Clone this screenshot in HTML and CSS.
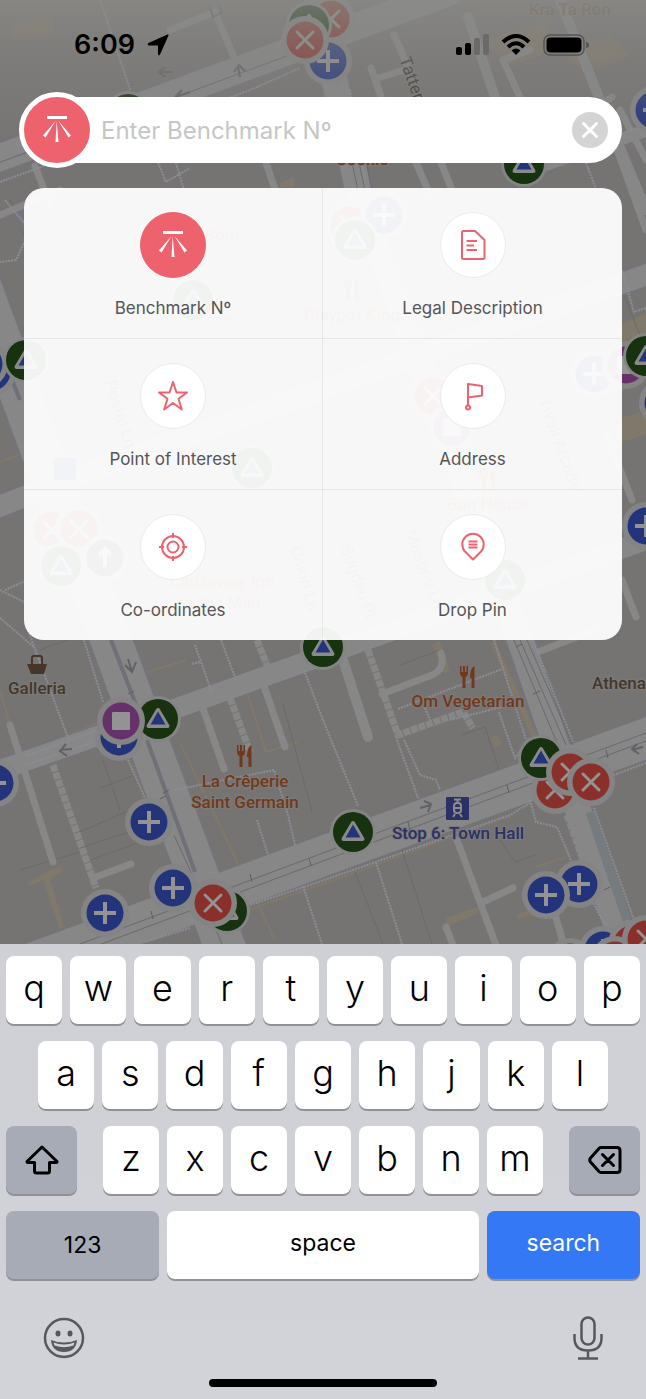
FILE: index.html
```
<!DOCTYPE html>
<html lang="en">
<head>
	<meta charset="utf-8">
	<meta name="viewport" content="width=device-width, initial-scale=1">
	<title>Benchmark Search</title>
	<link rel="stylesheet" href="styles.css">
</head>
<body>
	<svg class="defs" width="0" height="0" aria-hidden="true">
		<defs>
			<g id="m-plus">
				<circle r="24" class="halo"/>
				<circle r="18.5" class="blue"/>
				<path d="M-11 0H11M0 -11V11" class="glyph"/>
			</g>
			<g id="m-cross">
				<circle r="24" class="halo"/>
				<circle r="18.5" class="red"/>
				<path d="M-8 -8L8 8M8 -8L-8 8" class="glyph round"/>
			</g>
			<g id="m-tri">
				<circle r="23" class="halo"/>
				<circle r="20" class="green"/>
				<path d="M0 -9L9.500 7H-9.500Z" class="tri-edge"/>
				<path d="M0 -7.500L7.500 5.500H-7.500Z" class="blue"/>
			</g>
			<g id="m-square">
				<circle r="24" class="halo"/>
				<circle r="18.500" class="purple"/>
				<rect x="-9" y="-9" width="18" height="18" rx="1" class="glyph-fill"/>
			</g>
			<g id="m-arrow">
				<circle r="24" class="halo"/>
				<circle r="18.500" class="dark"/>
				<path d="M0 9V-8M-6 -3L0 -9L6 -3" class="glyph"/>
			</g>
		</defs>
		<symbol id="m-food" viewBox="0 0 16 24">
			<path d="M0 1v7q0 3 2.500 4V23h3V12Q8 11 8 8V1H6.500v6H5V1H3v6H1.500V1zM14.500 1Q10 3 10 13h1.500v10h3z"/>
		</symbol>
		<symbol id="benchmark" viewBox="0 0 30 28">
			<path d="M5 0H25V3H5zM14.700 5L16.500 26H13.500zM13.500 5L3.500 21.500L1 19.500zM16.500 5L29 19.500L26.500 21.500z"/>
		</symbol>
	</svg>

	<main class="screen">
		<svg class="map" viewBox="0 0 646 944" preserveAspectRatio="xMidYMin slice" aria-hidden="true">
			<defs>
				<linearGradient id="haze" x1="0" y1="0" x2="0" y2="1">
					<stop offset="0" stop-color="#8c8c89" stop-opacity=".75"/>
					<stop offset=".45" stop-color="#868684" stop-opacity=".4"/>
					<stop offset="1" stop-color="#868684" stop-opacity="0"/>
				</linearGradient>
			</defs>
			<rect width="646" height="944" fill="#767472"/>

			<!-- plazas and yards -->
			<g fill="#80786a">
				<path d="M12 24l42-8v20l-42 4zM480 42l64-22 18 26-50 20zM560 50l50-14 20 20-46 16zM620 325l26-12v60l-26 20zM622 418l24-8v24l-24 8zM446 918l32-11v7l-32 12zM516 915l24-9v6l-22 8zM280 183l14-6v10h-14zM490 737l8-2 4 10-8 2zM28 882l32-16 3 5-13 8 14 48-4 3-17-50-14 6zM432 645l8-4 10 30-6 2zM490 642l6 0 46 104-6 2z"/>
			</g>
			<g class="yard">
				<path d="M145 673L186 660M26 753L100 722M180 743L275 940M0 690L10 725M247 693L266 752L298 742M131 760L146 800M0 296L26 370M0 462L18 455M535 867L567 857M323 884L510 816M248 910L323 884"/>
			</g>

			<!-- building outlines -->
			<g class="plot">
				<path d="M75 834L130 810M80 848L135 830M85 862L140 842M103 760L120 810M100 788L132 776M20 870L80 852M283 704L312 812M355 872L383 944M402 850L432 944M500 840L515 862L535 855M462 735L485 727L502 780M40 650L120 620M10 200L30 250M400 665L440 650M520 200L560 300M610 260L646 350"/>
			</g>

			<!-- roads: casing first, surface above -->
			<g class="casing">
				<path d="M-20 165L450 -8" stroke-width="30"/>
				<path d="M-20 284L111 640L155 760L226 950" stroke-width="44"/>
				<path d="M0 770L180 707L380 635L660 535" stroke-width="22"/>
				<path d="M-20 982L323 856L680 726" stroke-width="42"/>
				<path d="M315 -10L358 190L520 640L626 950" stroke-width="30"/>
				<path d="M525 172L660 126M20 210L36 240" stroke-width="15"/>
				<path d="M-10 510L80 475L660 270" stroke-width="24"/>
			</g>
			<g class="road">
				<path d="M-20 165L450 -8" stroke-width="27"/>
				<path d="M-20 284L111 640L155 760L226 950" stroke-width="41"/>
				<path d="M0 770L180 707L380 635L660 535" stroke-width="20"/>
				<path d="M-20 982L323 856L680 726" stroke-width="40"/>
				<path d="M315 -10L358 190L520 640L626 950" stroke-width="26"/>
				<path d="M-10 510L80 475L660 270" stroke-width="21"/>
				<path d="M525 172L660 126" stroke-width="12"/>
				<path d="M343 660L368 737M556 -10L600 100L646 210M468 17L496 100" stroke-width="10"/>
				<path d="M10 725L53 862M200 700L224 769M263 683L285 747M382 694L432 675Q446 669 441 653M457 840L497 948M483 902L513 888M93 878L131 864M525 657L600 628M446 927L454 948M555 915L565 948M170 30L215 12L235 60M371 68L384 105M378 78L404 70M394 35L412 76M520 97L503 60L530 50M600 106L612 97M265 160L276 192M35 166L50 205M415 160L430 195M440 160L452 190M605 120L619 155L646 230M0 215L60 190M622 580L636 617M646 160L620 110M632 500L605 430" stroke-width="7"/>
			</g>
			<path class="rail" d="M345 130L360 200L514 640L558 745M352 130L367 200L520 640L566 745M358 120L374 200L527 640L573 745M-10 166L330 40M0 974L323 853L646 733M0 982L323 861L646 741M174 835L200 892L222 944"/>
			<path class="shade" d="M111 640L140 715M147 740L195 872M0 350L20 400"/>
			<path class="shade wide" d="M590 812L627 920"/>

			<!-- stepped walkways -->
			<path class="steps" d="M53 765L96 888M230 698L250 752M257 640L268 668M368 650L398 735L463 712L473 728M567 815L612 940"/>
			<path class="steps zig" d="M575 810L616 935"/>

			<!-- footpaths -->
			<path class="foot" d="M28 630L68 738M84 640L103 702M26 765L100 740M26 756L98 730M195 645L212 693M221 640L236 680M192 664L200 662M304 670L323 720L358 806M175 790L274 770L288 815L295 845M397 740L418 798M398 709L502 669M450 720L502 707M425 708L430 720M494 640L530 752M499 712L515 758L530 738M533 640L573 742M530 800L536 822L557 827L573 865L605 925M594 808L634 920M250 905L310 885L510 815L530 803M303 886L322 944M145 942L190 928M0 618L35 648M128 760L145 798M646 763L595 782M0 182L110 142L250 90L300 68M100 0L132 95M157 160L166 182L190 168M175 160L184 190M5 200L30 230L16 260L0 262M585 160L598 195M622 270L634 312L646 308M350 90L365 180M0 590L30 605M5 590L45 572M404 740L420 775L436 780L440 790M257 820L268 855M376 862L402 944M646 125L520 170"/>

			<!-- direction arrows -->
			<path class="dir" d="M128 659L132 672M125 665L132 672L136 662M72 749L60 750M66 744L60 751L67 756M420 808L431 805M424 801L431 804L428 812M643 747L632 750M637 744L632 749L639 754M240 77L238 66M234 72L239 65L245 71M190 92L175 97L182 90M175 97L181 102M172 72L160 72M165 67L159 72L165 77M209 5L213 17L222 12L218 5"/>
			<path class="tick" d="M128 694l6-3M163 793l6-3M160 799l6-3M250 874l2 8M309 858l2 8M151 911l2 8M408 822l2 8M507 785l2 8M606 750l2 8M516 647l6-3M533 694l7-3M604 890l6-3"/>

			<!-- labels -->
			<g class="label road-name">
				<text transform="translate(399 59) rotate(70)">Tatters</text>
				<text transform="translate(104 382) rotate(72)">Postal Ln</text>
				<text transform="translate(538 400) rotate(70)">Tivoli Arcade</text>
				<text transform="translate(340 548) rotate(70)">Sugden Pl</text>
				<text transform="translate(405 532) rotate(70)">Masons Ln</text>
				<text transform="translate(290 548) rotate(74)">Union Ln</text>
			</g>
			<g class="label food">
				<text x="362" y="165">Cookie</text>
				<text x="205" y="241">Pho Bòm</text>
				<text x="352" y="321">Claypot King</text>
				<text x="488" y="510">Bun House</text>
				<text x="222" y="587">Causeway Inn</text>
				<text x="218" y="609">on the Mall</text>
				<text x="468" y="707">Om Vegetarian</text>
				<text x="245" y="787">La Crêperie</text>
				<text x="245" y="808">Saint Germain</text>
				<use href="#m-food" x="460" y="665" width="16" height="24"/>
				<use href="#m-food" x="237" y="744" width="16" height="24"/>
				<use href="#m-food" x="480" y="468" width="16" height="24"/>
				<use href="#m-food" x="344" y="278" width="16" height="24"/>
			</g>
			<g class="label shop">
				<text x="37" y="694">Galleria</text>
				<text x="592" y="689" class="from-left">Athena</text>
				<path d="M27 664h20l-3 10H31z"/>
				<path d="M32 664v-6q0-2 2-2h6q2 0 2 2v6" fill="none" stroke="#46362a" stroke-width="2"/>
				<text x="570" y="15" class="faded">Kra Ta Ron</text>
			</g>
			<g class="label transit">
				<text x="458" y="839">Stop 6: Town Hall</text>
				<rect x="446" y="797" width="23" height="23" rx="1"/>
				<rect x="54" y="458" width="22" height="22" rx="1"/>
				<g fill="none" stroke="#8c8c90" stroke-width="2">
					<rect x="454" y="803" width="7" height="10" rx="3"/>
					<path d="M454 799.500h7M457.500 800v3M454 808h7M455 814l-2 3M460 814l2 3"/>
				</g>
			</g>

			<!-- benchmark markers -->
			<g>
				<use href="#m-cross" x="331" y="19"/>
				<use href="#m-tri" x="309" y="25"/>
				<use href="#m-plus" x="328" y="61"/>
				<use href="#m-cross" x="305" y="40"/>
				<use href="#m-tri" x="128" y="114"/>
				<use href="#m-plus" x="654" y="110"/>
				<use href="#m-tri" x="524" y="164"/>
				<use href="#m-cross" x="349" y="225"/>
				<use href="#m-plus" x="384" y="215"/>
				<use href="#m-tri" x="355" y="240"/>
				<use href="#m-tri" x="193" y="300"/>
				<use href="#m-plus" x="-8" y="372"/>
				<use href="#m-plus" x="-16" y="364"/>
				<use href="#m-tri" x="26" y="360"/>
				<use href="#m-plus" x="594" y="374"/>
				<use href="#m-square" x="626" y="365"/>
				<use href="#m-tri" x="646" y="356"/>
				<use href="#m-plus" x="663" y="403"/>
				<use href="#m-cross" x="433" y="396"/>
				<use href="#m-square" x="452" y="427"/>
				<use href="#m-tri" x="252" y="468"/>
				<use href="#m-cross" x="52" y="530"/>
				<use href="#m-cross" x="79" y="529"/>
				<use href="#m-tri" x="61" y="566"/>
				<use href="#m-arrow" x="105" y="558"/>
				<use href="#m-plus" x="646" y="526"/>
				<use href="#m-tri" x="505" y="580"/>
				<use href="#m-tri" x="323" y="647"/>
				<use href="#m-plus" x="119" y="737"/>
				<use href="#m-tri" x="158" y="719"/>
				<use href="#m-square" x="121" y="721"/>
				<use href="#m-plus" x="-5" y="783"/>
				<use href="#m-plus" x="149" y="822"/>
				<use href="#m-plus" x="173" y="888"/>
				<use href="#m-plus" x="105" y="913"/>
				<use href="#m-tri" x="227" y="911"/>
				<use href="#m-cross" x="213" y="903"/>
				<use href="#m-tri" x="353" y="832"/>
				<use href="#m-cross" x="555" y="790"/>
				<use href="#m-tri" x="541" y="758"/>
				<use href="#m-cross" x="570" y="772"/>
				<use href="#m-cross" x="591" y="782"/>
				<use href="#m-plus" x="579" y="884"/>
				<use href="#m-plus" x="546" y="895"/>
				<use href="#m-plus" x="570" y="962"/>
				<use href="#m-plus" x="603" y="950"/>
				<use href="#m-cross" x="632" y="944"/>
				<use href="#m-cross" x="615" y="960"/>
				<use href="#m-cross" x="646" y="939"/>
			</g>
			<rect width="646" height="150" fill="url(#haze)"/>
		</svg>

		<header class="status">
			<span class="time">6:09</span>
			<svg class="locate" width="22" height="22" viewBox="0 0 22 22" aria-hidden="true"><path d="M20.500 .5Q22 0 21.300 2L13 20.500Q11.500 22.500 11 20V11.500H2Q-.5 11 1.500 9z"/></svg>
			<svg width="33" height="22" viewBox="0 0 33 22" aria-label="Signal">
				<rect x="0" y="13" width="6" height="8" rx="2"/>
				<rect x="9" y="9" width="6" height="12" rx="2"/>
				<rect x="18" y="4" width="6" height="17" rx="2" fill="#6b6a69"/>
				<rect x="27" y="0" width="6" height="21" rx="2" fill="#6b6a69"/>
			</svg>
			<svg width="30" height="22" viewBox="0 0 30 22" aria-label="Wi-Fi">
				<g fill="none" stroke="#000" stroke-width="4">
					<path d="M2 8Q15 -4 28 8M7 13Q15 5.500 23 13"/>
				</g>
				<path d="M10.500 16.500Q15 12.500 19.500 16.500L15 21z"/>
			</svg>
			<svg width="47" height="22" viewBox="0 0 47 22" aria-label="Battery">
				<rect x="1" y="1" width="40" height="20" rx="6" fill="none" stroke="#555" stroke-width="1.500"/>
				<rect x="3.500" y="3.500" width="35" height="15" rx="4"/>
				<path d="M43 8q3 .5 3 3t-3 3z" fill="#555"/>
			</svg>
		</header>

		<form class="search">
			<span class="badge"><svg width="30" height="28"><use href="#benchmark"/></svg></span>
			<input type="text" placeholder="Enter Benchmark Nº" aria-label="Enter Benchmark Nº">
			<button type="reset" class="clear" aria-label="Clear">
				<svg width="16" height="16" viewBox="0 0 16 16"><path d="M1.500 1.500L14.500 14.500M14.500 1.500L1.500 14.500"/></svg>
			</button>
		</form>

		<nav class="modes">
			<button type="button" class="mode active">
				<span class="disc"><svg width="30" height="28"><use href="#benchmark"/></svg></span>
				Benchmark Nº
			</button>
			<button type="button" class="mode">
				<span class="disc"><svg width="32" height="32" viewBox="0 0 32 32"><path d="M6.500 2H18L27.500 11V28.500Q27.500 30 26 30H6.500Q5 30 5 28.500V3.500Q5 2 6.500 2zM9.500 12H20M9.500 16.500H17M9.500 21H20"/></svg></span>
				Legal Description
			</button>
			<button type="button" class="mode">
				<span class="disc"><svg width="32" height="32" viewBox="0 0 32 32"><path d="M16 2L19.500 12.500H30L21.500 18.800L24.800 29.500L16 23L7.200 29.500L10.500 18.800L2 12.500H12.500z"/></svg></span>
				Point of Interest
			</button>
			<button type="button" class="mode">
				<span class="disc"><svg width="32" height="32" viewBox="0 0 32 32"><path d="M11 26V4L25 6V15.500L11 17.500"/><circle cx="11" cy="27.500" r="2"/></svg></span>
				Address
			</button>
			<button type="button" class="mode">
				<span class="disc"><svg width="32" height="32" viewBox="0 0 32 32"><circle cx="16" cy="16" r="11"/><circle cx="16" cy="16" r="5.500"/><path d="M16 2V7M16 25V30M2 16H7M25 16H30"/></svg></span>
				Co-ordinates
			</button>
			<button type="button" class="mode">
				<span class="disc"><svg width="32" height="32" viewBox="0 0 32 32"><path d="M16 28.500L8 20.500A10.700 10.700 0 1 1 24 20.500zM11.500 10.500H20.500M11.500 13.500H20.500M11.500 16.500H20.500"/></svg></span>
				Drop Pin
			</button>
		</nav>
	</main>

	<section class="keyboard" aria-label="Keyboard">
		<div class="row">
			<button class="key">q</button><button class="key">w</button><button class="key">e</button><button class="key">r</button><button class="key">t</button><button class="key">y</button><button class="key">u</button><button class="key">i</button><button class="key">o</button><button class="key">p</button>
		</div>
		<div class="row inset">
			<button class="key">a</button><button class="key">s</button><button class="key">d</button><button class="key">f</button><button class="key">g</button><button class="key">h</button><button class="key">j</button><button class="key">k</button><button class="key">l</button>
		</div>
		<div class="row shifted">
			<button class="key grey" aria-label="Shift">
				<svg width="34" height="32" viewBox="0 0 34 32"><path d="M17 3L32 17.500Q32 18.500 31 18.500H24.500V27Q24.500 29 22.500 29H11.500Q9.500 29 9.500 27V18.500H3Q2 18.500 2 17.500z"/></svg>
			</button>
			<div class="row letters">
				<button class="key">z</button><button class="key">x</button><button class="key">c</button><button class="key">v</button><button class="key">b</button><button class="key">n</button><button class="key">m</button>
			</div>
			<button class="key grey" aria-label="Delete">
				<svg width="34" height="30" viewBox="0 0 34 30"><path d="M13 2.500H29Q32 2.500 32 5.500V24.500Q32 27.500 29 27.500H13Q12 27.500 11 26.500L2.500 17Q1 15 2.500 13L11 3.500Q12 2.500 13 2.500zM14.500 9.500L25.500 20.500M25.500 9.500L14.500 20.500"/></svg>
			</button>
		</div>
		<div class="row commands">
			<button class="key grey">123</button>
			<button class="key space">space</button>
			<button class="key go">search</button>
		</div>
		<div class="tools">
			<button aria-label="Emoji">
				<svg width="42" height="42" viewBox="0 0 42 42">
					<circle cx="21" cy="21" r="19" fill="none" stroke="#55585c" stroke-width="2.500"/>
					<ellipse cx="15" cy="16.500" rx="2.500" ry="3"/>
					<ellipse cx="27" cy="16.500" rx="2.500" ry="3"/>
					<path d="M8 23Q21 28 34 23Q33 35 21 35Q9 35 8 23z"/>
					<path d="M10.500 25.500Q21 29.500 31.500 25.500L30.500 28.500Q21 32 11.500 28.500z" fill="#d0d2d7"/>
				</svg>
			</button>
			<button aria-label="Dictate">
				<svg width="30" height="44" viewBox="0 0 30 44" fill="none" stroke="#55585c" stroke-width="2.500">
					<rect x="8.500" y="1.500" width="13" height="27" rx="6.500"/>
					<path d="M1.500 18V22Q1.500 34.500 15 34.500T28.500 22V18M15 34.500V42M5 42.500H25"/>
				</svg>
			</button>
		</div>
		<div class="home"></div>
	</section>
</body>
</html>
```

FILE: styles.css
```
* {
	box-sizing: border-box;
}
body {
	margin: 0;
	min-height: 100vh;
	display: flex;
	flex-direction: column;
	font-family: Inter, "Liberation Sans", sans-serif;
}
button {
	border: 0;
	padding: 0;
	background: none;
	font: inherit;
	color: inherit;
}
.defs {
	position: absolute;
}

/* map */
.screen {
	position: relative;
	flex: 1;
	padding: 0 24px 24px;
	overflow: hidden;
}
.map {
	position: absolute;
	left: 0;
	top: 0;
	width: 100%;
	height: 100%;
}
.casing, .road {
	fill: none;
	stroke: #73747e;
	stroke-linejoin: round;
	stroke-linecap: round;
}
.road {
	stroke: #878787;
}
.yard {
	fill: none;
	stroke: #80786a;
	stroke-width: 2;
}
.plot {
	fill: none;
	stroke: #6c6a69;
}
.rail {
	fill: none;
	stroke: #6a6a70;
}
.shade {
	fill: none;
	stroke: #6f7078;
	stroke-width: 4;
}
.shade.wide {
	stroke: #757b7e;
	stroke-width: 9;
}
.steps {
	fill: none;
	stroke: #878787;
	stroke-width: 7;
	stroke-dasharray: 7 1;
}
.steps.zig {
	stroke-width: 12;
	stroke-dasharray: 5 2;
}
.foot {
	fill: none;
	stroke: #8b8d96;
	stroke-width: 2;
	stroke-dasharray: 2 1;
}
.dir {
	fill: none;
	stroke: #626166;
	stroke-width: 2;
}
.tick {
	stroke: #5e5e64;
}
.label {
	font: 500 17px Roboto, sans-serif;
	text-anchor: middle;
}
.label text {
	stroke: #7d7b79;
	stroke-width: 2px;
	paint-order: stroke;
}
.label .from-left {
	text-anchor: start;
}
.label .faded {
	fill: #705a44;
}
.road-name {
	font-weight: 400;
	fill: #3a3a3a;
	text-anchor: start;
}
.food {
	fill: #70391c;
}
.shop {
	fill: #46362a;
}
.transit {
	fill: #2a3166;
}
.halo {
	fill: #848484;
}
.blue {
	fill: #23347b;
}
.red {
	fill: #8a302b;
}
.green {
	fill: #16320f;
}
.purple {
	fill: #66306a;
}
.dark {
	fill: #2c2c2c;
}
.glyph {
	fill: none;
	stroke: #939393;
	stroke-width: 4;
}
.glyph.round {
	stroke-width: 3;
	stroke-linecap: round;
}
.glyph-fill {
	fill: #939393;
}
.tri-edge {
	fill: #8a8a8a;
	stroke: #8a8a8a;
	stroke-width: 4;
	stroke-linejoin: round;
}

/* status bar */
.status {
	position: relative;
	display: flex;
	align-items: center;
	gap: 12px;
	height: 97px;
	padding: 0 32px 8px 50px;
}
.time {
	font-size: 27px;
	font-weight: 600;
}
.locate {
	margin-right: auto;
}

/* search field */
.search {
	position: relative;
	display: flex;
	align-items: center;
	height: 66px;
	border-radius: 33px;
	padding-right: 14px;
	background: #fff;
}
.badge {
	display: grid;
	place-items: center;
	flex: none;
	width: 76px;
	height: 76px;
	margin-left: -5px;
	border: 5px solid #fff;
	border-radius: 50%;
	background: #ee626e;
	fill: #fff;
}
.search input {
	flex: 1;
	min-width: 0;
	border: 0;
	padding: 0 6px;
	background: none;
	outline: none;
	font: 24px Inter, sans-serif;
}
.search input::placeholder {
	color: #c6c6c6;
}
.clear {
	display: grid;
	place-items: center;
	width: 36px;
	height: 36px;
	border-radius: 50%;
	background: #d4d4d4;
}
.clear path {
	stroke: #fff;
	stroke-width: 3;
	stroke-linecap: round;
}

/* search mode picker */
.modes {
	position: relative;
	display: grid;
	grid-template-columns: 1fr 1fr;
	margin-top: 25px;
	border-radius: 20px;
	overflow: hidden;
	background: rgba(255, 255, 255, .94);
}
.mode {
	display: flex;
	flex-direction: column;
	align-items: center;
	gap: 20px;
	padding: 24px 0 20px;
	border-bottom: 1px solid #e6e6e6;
	font-size: 17px;
	line-height: 20px;
	color: #555;
}
.mode:nth-child(odd) {
	border-right: 1px solid #e6e6e6;
}
.mode:nth-last-child(-n+2) {
	border-bottom: 0;
}
.disc {
	display: grid;
	place-items: center;
	width: 66px;
	height: 66px;
	border: 1px solid #ebebeb;
	border-radius: 50%;
	background: #fff;
	fill: none;
	stroke: #ee626e;
	stroke-width: 2;
	stroke-linejoin: round;
}
.active .disc {
	border-color: #ee626e;
	background: #ee626e;
	fill: #fff;
	stroke: none;
}

/* keyboard */
.keyboard {
	display: flex;
	flex-direction: column;
	gap: 17px;
	padding: 12px 6px;
	background: linear-gradient(#cfd0d6, #d1d3d8);
}
.row {
	display: flex;
	gap: 8px;
}
.row.inset {
	padding: 0 32px;
}
.row.shifted {
	gap: 26px;
}
.key {
	display: flex;
	justify-content: center;
	align-items: center;
	flex: 1 1 0;
	min-width: 0;
	height: 68px;
	padding-bottom: 4px;
	border-radius: 8px;
	background: #fff;
	box-shadow: 0 2px 0 #909195;
	font-size: 36px;
	font-weight: 300;
	color: #000;
}
.key.grey {
	padding-bottom: 0;
	background: #a6abb6;
}
.key path {
	fill: none;
	stroke: #000;
	stroke-width: 3;
	stroke-linejoin: round;
	stroke-linecap: round;
}
.shifted > .key {
	flex-grow: 71;
}
.letters {
	flex: 440 1 0;
}
.commands .key {
	flex-grow: 154;
	font-size: 23px;
	font-weight: 400;
}
.commands .space {
	flex-grow: 313;
}
.commands .go {
	background: #3478f6;
	color: #fff;
}
.tools {
	display: flex;
	justify-content: space-between;
	align-items: center;
	height: 42px;
	margin-top: 21px;
	padding: 0 37px;
}
.tools svg {
	display: block;
	fill: #55585c;
}
.tools svg[fill] {
	fill: none;
}
.home {
	width: 36%;
	height: 8px;
	margin: 3px auto 0;
	border-radius: 4px;
	background: #000;
}
```
